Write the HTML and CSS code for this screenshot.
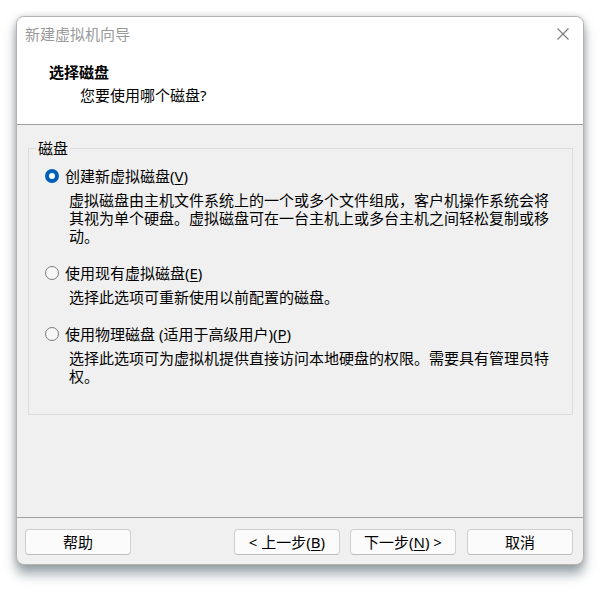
FILE: index.html
```html
<!DOCTYPE html>
<html lang="zh-CN">
<head>
    <meta charset="UTF-8">
    <meta name="viewport" content="width=device-width, initial-scale=1.0">
    <title>新建虚拟机向导</title>
    <link rel="stylesheet" href="styles.css">
</head>
<body>

<div class="window">
    <!-- Title bar -->
    <div class="titlebar">
        <span class="title">新建虚拟机向导</span>
        <svg class="close" width="12" height="12" viewBox="0 0 12 12">
            <path d="M0.5 0.5 L11.5 11.5 M11.5 0.5 L0.5 11.5" stroke="#7a7a7a" stroke-width="1.1" fill="none"/>
        </svg>
    </div>

    <!-- Wizard page header -->
    <div class="header">
        <h2>选择磁盘</h2>
        <p>您要使用哪个磁盘?</p>
    </div>

    <!-- Page content -->
    <div class="content">
        <fieldset class="group">
            <legend>磁盘</legend>

            <div class="option">
                <span class="radio checked"></span>
                <span class="label">创建新虚拟磁盘(<u>V</u>)</span>
            </div>
            <p class="desc">虚拟磁盘由主机文件系统上的一个或多个文件组成，客户机操作系统会将<br>其视为单个硬盘。虚拟磁盘可在一台主机上或多台主机之间轻松复制或移<br>动。</p>

            <div class="option">
                <span class="radio"></span>
                <span class="label">使用现有虚拟磁盘(<u>E</u>)</span>
            </div>
            <p class="desc">选择此选项可重新使用以前配置的磁盘。</p>

            <div class="option">
                <span class="radio"></span>
                <span class="label">使用物理磁盘 (适用于高级用户)(<u>P</u>)</span>
            </div>
            <p class="desc">选择此选项可为虚拟机提供直接访问本地硬盘的权限。需要具有管理员特<br>权。</p>
        </fieldset>
    </div>

    <!-- Buttons -->
    <div class="footer">
        <button>帮助</button>
        <div class="spacer"></div>
        <button>&lt; 上一步(<u>B</u>)</button>
        <button>下一步(<u>N</u>) &gt;</button>
        <button class="cancel">取消</button>
    </div>
</div>

</body>
</html>
```

FILE: styles.css
```css
/* Page */
html {
    background: #ffffff;
}

body {
    margin: 0;
    padding: 16px 16px 26px 16px;
    background: #ffffff;
    font-family: "Noto Sans", "Noto Sans CJK SC", sans-serif;
    font-size: 15px;
    color: #000;
}

/* Dialog window */
.window {
    width: 568px;
    height: 549px;
    box-sizing: border-box;
    border: 1px solid #b4b4b4;
    border-radius: 8px;
    display: flex;
    flex-direction: column;
    background: #f0f0f0;
    box-shadow: 0 9px 12px rgba(60, 80, 90, 0.5), 0 0 6px rgba(0, 0, 0, 0.18);
}

/* Title bar */
.titlebar {
    height: 36px;
    background: #fff;
    border-radius: 7px 7px 0 0;
    display: flex;
    align-items: center;
    justify-content: space-between;
    padding: 0 14px 0 8px;
}

.title {
    color: #9a9a9a;
    line-height: 18px;
    margin-top: -2px;
}

.close {
    margin-top: -2px;
}

/* Header */
.header {
    height: 72px;
    background: #fff;
    padding-top: 10px;
    box-sizing: border-box;
    border-bottom: 1px solid #a0a0a0;
}

.header h2 {
    margin: 0 0 0 32px;
    font-size: 15px;
    font-weight: bold;
    line-height: 19px;
}

.header p {
    margin: 4px 0 0 63px;
    line-height: 19px;
}

/* Content */
.content {
    flex: 1;
    padding: 14px 10px 0 11px;
    border-bottom: 1px solid #a0a0a0;
}

.group {
    margin: 0;
    padding: 0 16px 29px 16px;
    border: 1px solid #dcdcdc;
    min-width: 0;
}

.group legend {
    margin-left: -9px;
    padding: 0 2px;
    line-height: 18px;
}

.option {
    display: flex;
    align-items: center;
    gap: 6px;
    line-height: 18px;
    margin-top: 19px;
}

.option:first-of-type {
    margin-top: 10px;
}

.radio {
    width: 14px;
    height: 14px;
    box-sizing: border-box;
    border-radius: 50%;
    border: 1px solid #7c7c7c;
    background: #f7f7f7;
}

.radio.checked {
    border: 4px solid #005fb8;
    background: #fff;
}

.desc {
    margin: 6px 0 0 24px;
    line-height: 18px;
    white-space: nowrap;
    text-spacing-trim: space-all;
}

u {
    text-decoration-thickness: 1px;
    text-underline-offset: 2px;
}

/* Footer buttons */
.footer {
    height: 46px;
    border-radius: 0 0 7px 7px;
    display: flex;
    align-items: flex-start;
    padding: 11px 10px 0 8px;
    box-sizing: border-box;
    gap: 10px;
}

.spacer {
    flex: 1;
}

button {
    width: 106px;
    height: 26px;
    padding: 0;
    font-family: inherit;
    font-size: 15px;
    color: #000;
    background: #fbfbfb;
    border: 1px solid #cfcfcf;
    border-bottom-color: #bdbdbd;
    border-radius: 4px;
    line-height: 18px;
}

button.cancel {
    margin-left: 1px;
}
```
